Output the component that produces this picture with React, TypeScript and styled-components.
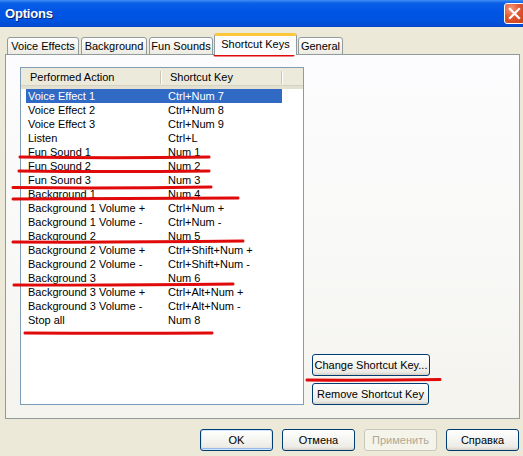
import React from 'react';
import styled, { createGlobalStyle } from 'styled-components';

const GlobalStyle = createGlobalStyle`
  html, body {
    margin: 0;
    padding: 0;
    background: #ece9d8;
  }
  body {
    font-family: 'Liberation Sans', Arial, sans-serif;
    font-size: 11px;
    color: #000;
  }
`;

const Window = styled.div`
  position: relative;
  width: 523px;
  height: 456px;
  overflow: hidden;
  background: #ece9d8;
  display: flex;
  flex-direction: column;
`;

const TitleBar = styled.div`
  height: 27px;
  flex: none;
  display: flex;
  align-items: center;
  justify-content: space-between;
  padding-left: 5px;
  background: linear-gradient(
    to bottom,
    #3d8cf5 0%,
    #0a5fe6 12%,
    #0055e5 40%,
    #0053e0 75%,
    #0049cc 100%
  );
`;

const Title = styled.span`
  color: #fff;
  font-weight: bold;
  font-size: 13px;
  letter-spacing: -0.2px;
  text-shadow: 1px 1px 0 #0a246a;
`;

const CloseButton = styled.div`
  width: 21px;
  height: 21px;
  margin-right: -2px;
  box-sizing: border-box;
  border: 1px solid #fff;
  border-radius: 3px;
  background: radial-gradient(circle at 30% 25%, #f39a7e 0%, #e2552f 45%, #c7401b 100%);
  display: flex;
  align-items: center;
  justify-content: center;
`;

const Body = styled.div`
  flex: 1;
  display: flex;
  flex-direction: column;
  padding: 7px 4px 0 5px;
`;

const TabStrip = styled.div`
  display: flex;
  align-items: flex-end;
  height: 21px;
  padding-left: 2px;
  position: relative;
  z-index: 1;
  margin-bottom: -1px;
`;

const Tab = styled.div<{ $active?: boolean; $w: number }>`
  box-sizing: border-box;
  width: ${(p) => p.$w}px;
  height: ${(p) => (p.$active ? 22 : 18)}px;
  margin-right: ${(p) => (p.$active ? 1 : 2)}px;
  margin-left: ${(p) => (p.$active ? -1 : 0)}px;
  border: 1px solid #919b9c;
  border-bottom: ${(p) => (p.$active ? 'none' : '1px solid #919b9c')};
  border-top: ${(p) => (p.$active ? '3px solid #ffc83c' : '1px solid #919b9c')};
  border-radius: 3px 3px 0 0;
  background: ${(p) =>
    p.$active ? '#fcfcfe' : 'linear-gradient(to bottom, #fefefe 0%, #f4f3ee 60%, #ebeae3 100%)'};
  display: flex;
  align-items: center;
  justify-content: center;
  padding-bottom: ${(p) => (p.$active ? 3 : 0)}px;
  white-space: nowrap;
`;

const Panel = styled.div`
  box-sizing: border-box;
  width: 515px;
  height: 365px;
  border: 1px solid #919b9c;
  background: linear-gradient(to bottom, #fcfcfe 0%, #f8f8f6 60%, #f4f3ee 100%);
  display: flex;
  padding: 12px 0 13px 14px;
`;

const ListView = styled.div`
  box-sizing: border-box;
  width: 284px;
  height: 338px;
  border: 1px solid #7f9db9;
  background: #fff;
  display: flex;
  flex-direction: column;
`;

const Header = styled.div`
  height: 21px;
  flex: none;
  display: flex;
  box-sizing: border-box;
  background: #ebeadb;
  border-bottom: 3px solid #e2e0d0;
  box-shadow: inset 0 -1px 0 #d6d2c2;
`;

const HeaderCell = styled.div<{ $w: number }>`
  box-sizing: border-box;
  width: ${(p) => p.$w}px;
  padding-left: 9px;
  display: flex;
  align-items: center;
  position: relative;
  &::after {
    content: '';
    position: absolute;
    right: 0;
    top: 3px;
    bottom: 2px;
    width: 1px;
    background: #c7c5b2;
    box-shadow: 1px 0 0 #fff;
  }
`;

const Rows = styled.div`
  display: flex;
  flex-direction: column;
  padding-left: 5px;
`;

const Row = styled.div<{ $selected?: boolean }>`
  display: grid;
  grid-template-columns: 140px 116px;
  width: 256px;
  height: 14px;
  line-height: 14px;
  background: ${(p) => (p.$selected ? '#316ac5' : 'transparent')};
  color: ${(p) => (p.$selected ? '#fff' : '#000')};
`;

const Cell = styled.div`
  padding-left: 2px;
  white-space: nowrap;
  overflow: hidden;
`;

const SideColumn = styled.div`
  display: flex;
  flex-direction: column;
  justify-content: flex-end;
  gap: 7px;
  padding-left: 8px;
`;

const Button = styled.button<{ $w?: number; $default?: boolean }>`
  box-sizing: border-box;
  width: ${(p) => p.$w ?? 73}px;
  height: 22px;
  padding: 0;
  font-family: 'Liberation Sans', Arial, sans-serif;
  font-size: 11px;
  color: #000;
  border: 1px solid #003c74;
  border-radius: 3px;
  background: linear-gradient(to bottom, #ffffff 0%, #f4f4f0 50%, #ecebe6 85%, #d6d0c5 100%);
  box-shadow: ${(p) =>
    p.$default ? 'inset 0 0 0 1px #cee7ff, inset 0 -1px 0 1px #98b8ea' : 'none'};
  white-space: nowrap;
  &:disabled {
    color: #aca899;
    border-color: #c9c7ba;
    background: #f5f4ea;
  }
`;

const Footer = styled.div`
  display: flex;
  justify-content: flex-end;
  gap: 9px;
  margin-top: 10px;
`;

const Annotations = styled.svg`
  position: absolute;
  left: 0;
  top: 0;
  pointer-events: none;
`;

const rows: [string, string][] = [
  ['Voice Effect 1', 'Ctrl+Num 7'],
  ['Voice Effect 2', 'Ctrl+Num 8'],
  ['Voice Effect 3', 'Ctrl+Num 9'],
  ['Listen', 'Ctrl+L'],
  ['Fun Sound 1', 'Num 1'],
  ['Fun Sound 2', 'Num 2'],
  ['Fun Sound 3', 'Num 3'],
  ['Background 1', 'Num 4'],
  ['Background 1 Volume +', 'Ctrl+Num +'],
  ['Background 1 Volume -', 'Ctrl+Num -'],
  ['Background 2', 'Num 5'],
  ['Background 2 Volume +', 'Ctrl+Shift+Num +'],
  ['Background 2 Volume -', 'Ctrl+Shift+Num -'],
  ['Background 3', 'Num 6'],
  ['Background 3 Volume +', 'Ctrl+Alt+Num +'],
  ['Background 3 Volume -', 'Ctrl+Alt+Num -'],
  ['Stop all', 'Num 8'],
];

const tabs = [
  { label: 'Voice Effects', w: 72 },
  { label: 'Background', w: 66 },
  { label: 'Fun Sounds', w: 64 },
  { label: 'Shortcut Keys', w: 83, active: true },
  { label: 'General', w: 45 },
];

// hand-drawn red underlines from the screenshot
const marks = [
  'M215 55 L293 55',
  'M20 157 Q110 158.5 209 157',
  'M19 171 Q110 172 209 171',
  'M13 187.5 Q110 188.5 211 187',
  'M13 199 Q120 199 238 198',
  'M13 242 Q120 242.5 243 241',
  'M14 285 Q120 285.5 233 284',
  'M25 333 Q120 333.5 212 333',
  'M307 380 Q370 380.5 440 379.5',
];

export default function App() {
  return (
    <>
      <GlobalStyle />
      <Window>
        <TitleBar>
          <Title>Options</Title>
          <CloseButton>
            <svg width="13" height="13" viewBox="0 0 13 13">
              <path d="M2 2 L11 11 M11 2 L2 11" stroke="#fff" strokeWidth="2.2" strokeLinecap="square" />
            </svg>
          </CloseButton>
        </TitleBar>
        <Body>
          <TabStrip>
            {tabs.map((t) => (
              <Tab key={t.label} $w={t.w} $active={t.active}>
                {t.label}
              </Tab>
            ))}
          </TabStrip>
          <Panel>
            <ListView>
              <Header>
                <HeaderCell $w={140}>Performed Action</HeaderCell>
                <HeaderCell $w={121}>Shortcut Key</HeaderCell>
              </Header>
              <Rows>
                {rows.map(([action, key], i) => (
                  <Row key={action} $selected={i === 0}>
                    <Cell>{action}</Cell>
                    <Cell>{key}</Cell>
                  </Row>
                ))}
              </Rows>
            </ListView>
            <SideColumn>
              <Button $w={118}>Change Shortcut Key...</Button>
              <Button $w={117}>Remove Shortcut Key</Button>
            </SideColumn>
          </Panel>
          <Footer>
            <Button $default>OK</Button>
            <Button>Отмена</Button>
            <Button disabled>Применить</Button>
            <Button>Справка</Button>
          </Footer>
        </Body>
        <Annotations width="523" height="456" viewBox="0 0 523 456">
          {marks.map((d) => (
            <path key={d} d={d} stroke="#e00a0a" strokeWidth="3" strokeLinecap="round" fill="none" />
          ))}
        </Annotations>
      </Window>
    </>
  );
}
